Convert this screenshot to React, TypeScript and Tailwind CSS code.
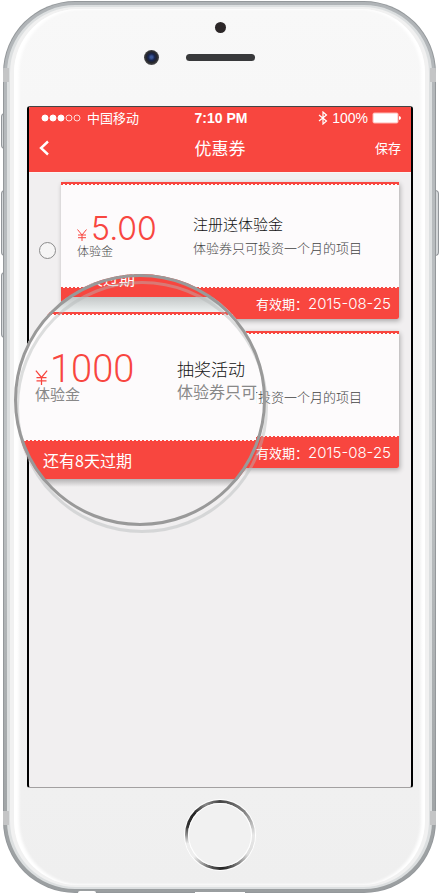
import React from "react";

const perforation =
  "h-px bg-[repeating-linear-gradient(90deg,#f8463f_0_2px,#fdfbfc_2px_4px)]";

type Coupon = { id: string; amount: string; title: string; note: string; expires: string };

const coupons: Coupon[] = [
  { id: "c1", amount: "5.00", title: "注册送体验金", note: "体验券只可投资一个月的项目", expires: "2015-08-25" },
  { id: "c2", amount: "1000", title: "抽奖活动", note: "体验券只可投资一个月的项目", expires: "2015-08-25" },
];

function YenIcon({ className }: { className: string }) {
  return (
    <svg viewBox="0 0 10 12" className={className} fill="none" stroke="#f8463f" strokeWidth="1" aria-label="¥">
      <path d="M0.5 0.5 L5 6 L9.5 0.5 M5 6 V12 M1 6 H9 M1 8.7 H9" />
    </svg>
  );
}

function StatusBar() {
  return (
    <div className="grid h-[22px] grid-cols-[1fr_auto_1fr] items-center pl-3 pr-[10px]">
      <div className="flex items-center gap-1.5">
        <svg viewBox="0 0 40 8" className="h-2 w-10" fill="#fff" stroke="#fff">
          <circle cx="4" cy="4" r="3" />
          <circle cx="12" cy="4" r="3" />
          <circle cx="20" cy="4" r="3" />
          <circle cx="28" cy="4" r="3" fill="none" strokeWidth="0.8" />
          <circle cx="36" cy="4" r="3" fill="none" strokeWidth="0.8" />
        </svg>
        <span className="text-[13px]">中国移动</span>
      </div>
      <span className="font-['Liberation_Sans',sans-serif] text-sm font-semibold">7:10 PM</span>
      <div className="flex items-center justify-end gap-1">
        <svg viewBox="0 0 10 14" className="h-[14px] w-[10px]" fill="none" stroke="#fff" strokeWidth="1.2">
          <path d="M1 4 L8.5 10 L5 13 V1 L8.5 4 L1 10" />
        </svg>
        <span className="font-['Liberation_Sans',sans-serif] text-sm">100%</span>
        <svg viewBox="0 0 29 12" className="h-3 w-[29px]" fill="#fff">
          <rect x="0.5" y="0.5" width="26" height="11" rx="2" fill="#ffb5b1" />
          <rect x="1.5" y="1.5" width="24" height="9" rx="1" />
          <path d="M27 4 Q29 4.5 29 6 Q29 7.500 27 8 Z" />
        </svg>
      </div>
    </div>
  );
}

function CouponRow({ coupon }: { coupon: Coupon }) {
  return (
    <li className="flex items-center pl-[10px] pr-3">
      <input
        type="radio"
        name="coupon"
        id={coupon.id}
        className="size-[17px] shrink-0 appearance-none rounded-full border border-[#8b8b8b] bg-[#f6f5f5]"
      />
      <label
        htmlFor={coupon.id}
        className="ml-[5px] block min-w-0 flex-1 rounded-[2px] bg-[#fdfbfc] shadow-[1px_2px_5px_rgba(0,0,0,0.3)]"
      >
        <span className="block h-[2px] bg-[#f8463f]" />
        <span className={`block ${perforation}`} />
        <span className="grid h-[102px] grid-cols-[116px_1fr] pl-4">
          <span className="block pt-7">
            <span className="flex items-end gap-1 font-[Inter,sans-serif] text-[32px] leading-8 font-light text-[#f8463f]">
              <YenIcon className="mb-1 h-3 w-[10px]" />
              <span>{coupon.amount}</span>
            </span>
            <span className="block text-xs leading-3 font-light text-[#444]">体验金</span>
          </span>
          <span className="block pt-[27px] whitespace-nowrap">
            <span className="block text-[15px] leading-6 font-light text-[#111]">{coupon.title}</span>
            <span className="block text-[13px] leading-6 font-light text-[#444]">{coupon.note}</span>
          </span>
        </span>
        <span className={`block ${perforation}`} />
        <span className="flex h-[31px] items-center justify-end rounded-b-[2px] bg-[#f8463f] pr-2 text-white">
          <span className="text-[13px]">有效期：</span>
          <span className="pt-px font-[Inter,sans-serif] text-[15px] font-light">{coupon.expires}</span>
        </span>
      </label>
    </li>
  );
}

function Magnifier() {
  return (
    <div className="pointer-events-none absolute top-[274px] left-[14px] size-[252px]">
      <div className="absolute inset-0 overflow-hidden rounded-full">
        <div className="h-[23px] w-full bg-[#f8463f] pl-[73px] text-base leading-[9px] text-white">天过期</div>
        <div className="h-[15px] w-full bg-linear-to-b from-[#c3c7c7] to-[#edf1f1]" />
        <div className="w-[242px] bg-[#fdfbfc]">
          <div className="h-[2px] bg-[#f8463f]" />
          <div className={perforation} />
          <div className="grid h-[125px] grid-cols-[142px_1fr] pl-[21px] whitespace-nowrap">
            <div className="pt-[35px]">
              <div className="flex items-end gap-0.5 font-[Roboto,'Liberation_Sans',sans-serif] text-[38px] leading-[38px] font-light text-[#f8463f]">
                <YenIcon className="mb-[3px] h-[15px] w-[13px]" />
                <span>1000</span>
              </div>
              <div className="text-[15px] leading-3 text-[#888]">体验金</div>
            </div>
            <div className="pt-[42px]">
              <div className="text-[17px] leading-6 font-light text-[#111]">抽奖活动</div>
              <div className="text-base leading-5 text-[#888]">体验券只可</div>
            </div>
          </div>
          <div className={perforation} />
        </div>
        <div className="h-[38px] w-full bg-[#f8463f] pl-[29px] text-base leading-[38px] text-white">还有8天过期</div>
        <div className="h-2 w-full bg-linear-to-b from-black/25 to-transparent" />
      </div>
      <div className="absolute top-[7px] left-0.5 size-full rounded-full border-[3px] border-[#b4b8b8]/45" />
      <div className="absolute inset-0 rounded-full border-[3px] border-[#999]" />
    </div>
  );
}

const sideKey = "absolute w-1 border border-[#92969a] bg-[#d5d8da]";
const antennaBand = "absolute h-[14px] w-[6px] bg-[#c4c5c6]";

export default function App() {
  return (
    <div className="relative bg-white pt-px pr-1 pb-0.5 pl-[3px] font-['Noto_Sans_CJK_SC',sans-serif] text-[#333]">
      <div className={`${sideKey} top-[113px] left-[1px] h-9 rounded-l-sm`} />
      <div className={`${sideKey} top-[190px] left-[1px] h-[66px] rounded-l-sm`} />
      <div className={`${sideKey} top-[272px] left-[1px] h-[66px] rounded-l-sm`} />
      <div className={`${sideKey} top-[190px] right-[1px] h-[66px] rounded-r-sm`} />

      <div className="relative overflow-hidden rounded-[72px] bg-[#94989b] p-px">
        <div className="rounded-[71px] bg-linear-to-b from-[#b0b4b7] via-[#bfc3c5] to-[#9a9ea0] p-[3px]">
          <div className="rounded-[68px] bg-[#dcdfe0] px-[3px] py-0.5">
            <div className="rounded-[66px] bg-[#f1f1f1] px-1 py-0.5">
              <div className="rounded-[64px] bg-linear-to-b from-[#f8f8f8] to-[#efefef] pr-3 pl-[13px] shadow-[inset_5px_0_3px_#fff,inset_-4px_0_3px_#fff]">
                <div className="flex h-[97px] flex-col items-center pt-[13px]">
                  <div className="size-[11px] rounded-full bg-[#2c2728]" />
                  <div className="relative mt-[21px] h-[7px] w-[69px] rounded-full bg-[#38393b]">
                    <div className="absolute top-[-4px] left-[-42px] size-[15px] rounded-full bg-[radial-gradient(circle_at_50%_48%,#3b5796_0_10%,#18244f_30%,#25262b_50%,#4b4b4d_70%)]" />
                  </div>
                </div>

                <main className="overflow-hidden rounded-[3px] border-x-2 border-y border-x-black border-t-[#444] border-b-[#a3a0a1] bg-[#f1eff0]">
                  <header className="h-[65px] bg-[#f8463f] text-white">
                    <StatusBar />
                    <div className="grid h-[38px] grid-cols-[1fr_auto_1fr] items-center pr-[10px] pl-[10px]">
                      <button type="button" aria-label="返回" className="w-[10px]">
                        <svg viewBox="0 0 10 16" className="h-4 w-[10px]" fill="none" stroke="#fff" strokeWidth="2.4">
                          <path d="M9 1.500 L2 8 L9 14.500" />
                        </svg>
                      </button>
                      <h1 className="text-[17px]">优惠券</h1>
                      <button type="button" className="justify-self-end text-[13px]">保存</button>
                    </div>
                  </header>
                  <ul className="flex min-h-[615px] flex-col gap-3 border-t border-[#fbf4f4] pt-[9px]">
                    {coupons.map((c) => (
                      <CouponRow key={c.id} coupon={c} />
                    ))}
                  </ul>
                </main>

                <div className="flex h-[97px] justify-center pt-3">
                  <button
                    type="button"
                    aria-label="主屏幕"
                    className="size-[70px] rounded-full bg-[conic-gradient(from_0deg,#444,#888_50deg,#e8e8e8_90deg,#ddd_125deg,#888_145deg,#222_175deg,#555_195deg,#eee_230deg,#eee_255deg,#333_285deg,#222_310deg,#888_335deg,#444)] p-[3px] shadow-[0_0_0_1px_#fff]"
                  >
                    <span className="block size-full rounded-full bg-[#f1f1f1] shadow-[inset_0_0_0_1px_#fff]" />
                  </button>
                </div>
              </div>
            </div>
          </div>
        </div>
        <div className={`${antennaBand} top-[67px] left-0`} />
        <div className={`${antennaBand} top-[67px] right-0`} />
        <div className={`${antennaBand} bottom-[68px] left-0`} />
        <div className={`${antennaBand} right-0 bottom-[68px]`} />
        <div className="absolute bottom-0 left-[75px] h-0.5 w-[18px] rounded-t-full bg-white" />
        <div className="absolute bottom-0 left-[192px] h-px w-[50px] bg-white" />
      </div>
      <Magnifier />
    </div>
  );
}
